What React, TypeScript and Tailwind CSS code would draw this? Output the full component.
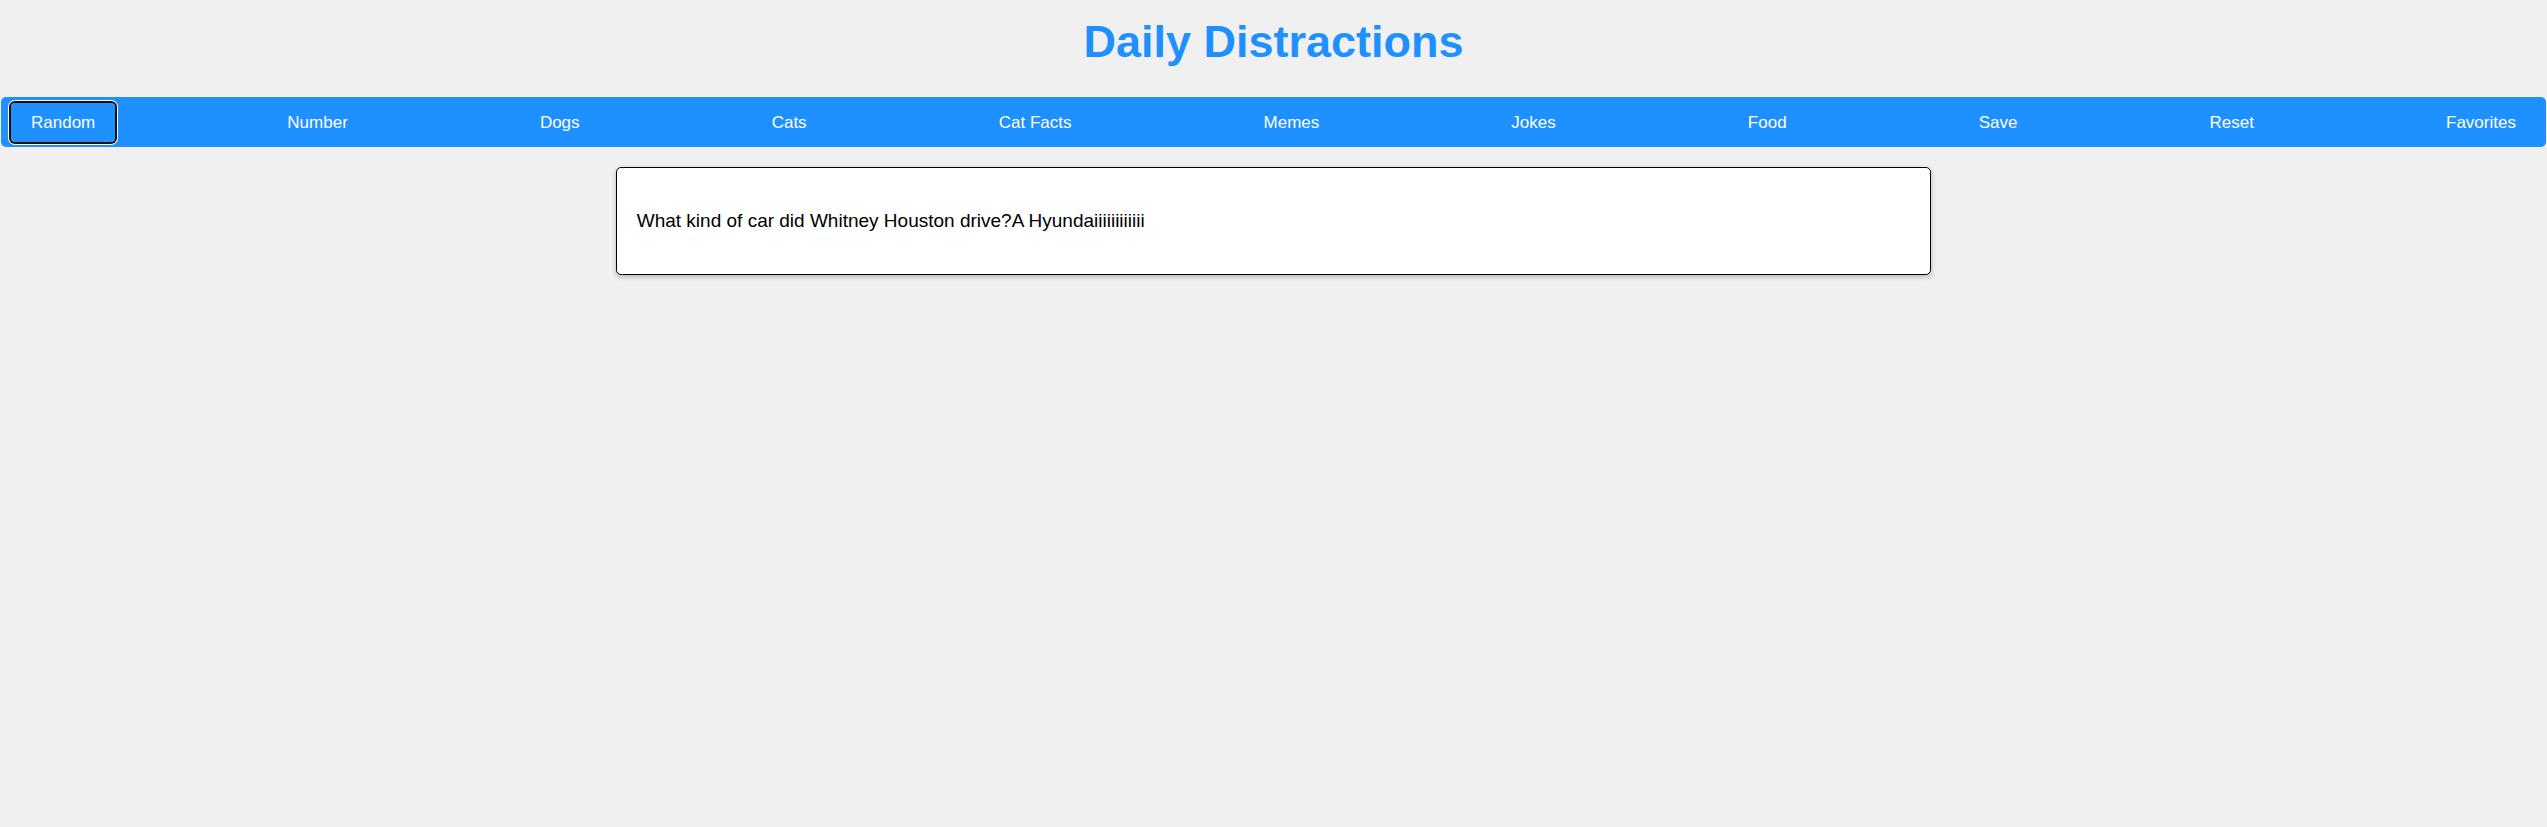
const tabs = ['Random', 'Number', 'Dogs', 'Cats', 'Cat Facts', 'Memes', 'Jokes', 'Food', 'Save', 'Reset', 'Favorites'];

const App = () => {
  return (
    <div className="min-h-screen bg-[#f0f0f0] font-['Liberation_Sans',Arial,sans-serif]">
      <h1 className="pt-[16px] text-center text-[45px] font-bold leading-[52px] text-[#1e90ff]">Daily Distractions</h1>

      <nav className="mx-px mt-[29px] flex h-[50px] items-center justify-between rounded-[5px] bg-[#1e90ff] px-[10px]">
        {tabs.map((tab, i) => (
          <button
            key={tab}
            className={
              i === 0
                ? 'rounded-[4px] px-[20px] py-[10px] text-[17px] leading-[19px] text-white shadow-[0_0_0_2px_#101010,0_0_0_3px_#ffffff]'
                : 'rounded-[4px] px-[20px] py-[10px] text-[17px] leading-[19px] text-white'
            }
          >
            {tab}
          </button>
        ))}
      </nav>

      <div className="mx-auto mt-[20px] w-1/2 box-content rounded-[5px] border border-black bg-white px-[20px] py-[42px] shadow-[0_2px_5px_rgba(0,0,0,0.25)]">
        <p className="text-[19px] leading-[22px] text-black">What kind of car did Whitney Houston drive?A Hyundaiiiiiiiiiiii</p>
      </div>
    </div>
  );
};

export default App;
